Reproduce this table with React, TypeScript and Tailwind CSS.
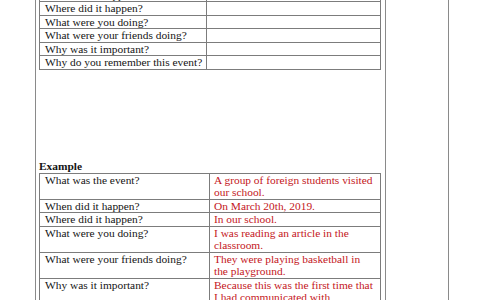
const topRows = [
  "When did it happen?",
  "Where did it happen?",
  "What were you doing?",
  "What were your friends doing?",
  "Why was it important?",
  "Why do you remember this event?",
];

const exampleRows: { q: string; a: string[] }[] = [
  { q: "What was the event?", a: ["A group of foreign students visited", "our school."] },
  { q: "When did it happen?", a: ["On March 20th, 2019."] },
  { q: "Where did it happen?", a: ["In our school."] },
  { q: "What were you doing?", a: ["I was reading an article in the", "classroom."] },
  { q: "What were your friends doing?", a: ["They were playing basketball in", "the playground."] },
  { q: "Why was it important?", a: ["Because this was the first time that", "I had communicated with", "foreigners."] },
];

export default function App() {
  return (
    <div
      className="w-[484px] h-[300px] overflow-hidden bg-white flex text-[11.4px] leading-[12.5px] text-[#141414]"
      style={{ fontFamily: '"Liberation Serif", "Times New Roman", serif' }}
    >
      <div className="w-[35px] shrink-0" />
      <div className="w-[350px] shrink-0 border-l-[1.5px] border-[#8a8a8a] pl-[3px]">
        <div className="w-[342px] -mt-[12.5px] border-l border-r border-t border-[#7c7c7c]">
          {topRows.map((q) => (
            <div key={q} className="flex border-b border-[#7c7c7c]">
              <div className="w-[167px] pl-[5px] border-r border-[#7c7c7c]">{q}</div>
              <div className="flex-1">&nbsp;</div>
            </div>
          ))}
        </div>

        <div className="mt-[90px] font-bold leading-[13px]">Example</div>
        <div className="w-[342px] border-l border-r border-t border-[#7c7c7c]">
          {exampleRows.map((r) => (
            <div key={r.q} className="flex border-b border-[#7c7c7c]">
              <div className="w-[170px] pl-[5px] border-r border-[#7c7c7c]">{r.q}</div>
              <div className="flex-1 pl-[4px] text-[#c4161c]">
                {r.a.map((line) => (
                  <div key={line}>{line}</div>
                ))}
              </div>
            </div>
          ))}
        </div>
      </div>
      <div className="w-[64px] shrink-0 border-l-[1.5px] border-r-[1.5px] border-[#8a8a8a]" />
    </div>
  );
}
